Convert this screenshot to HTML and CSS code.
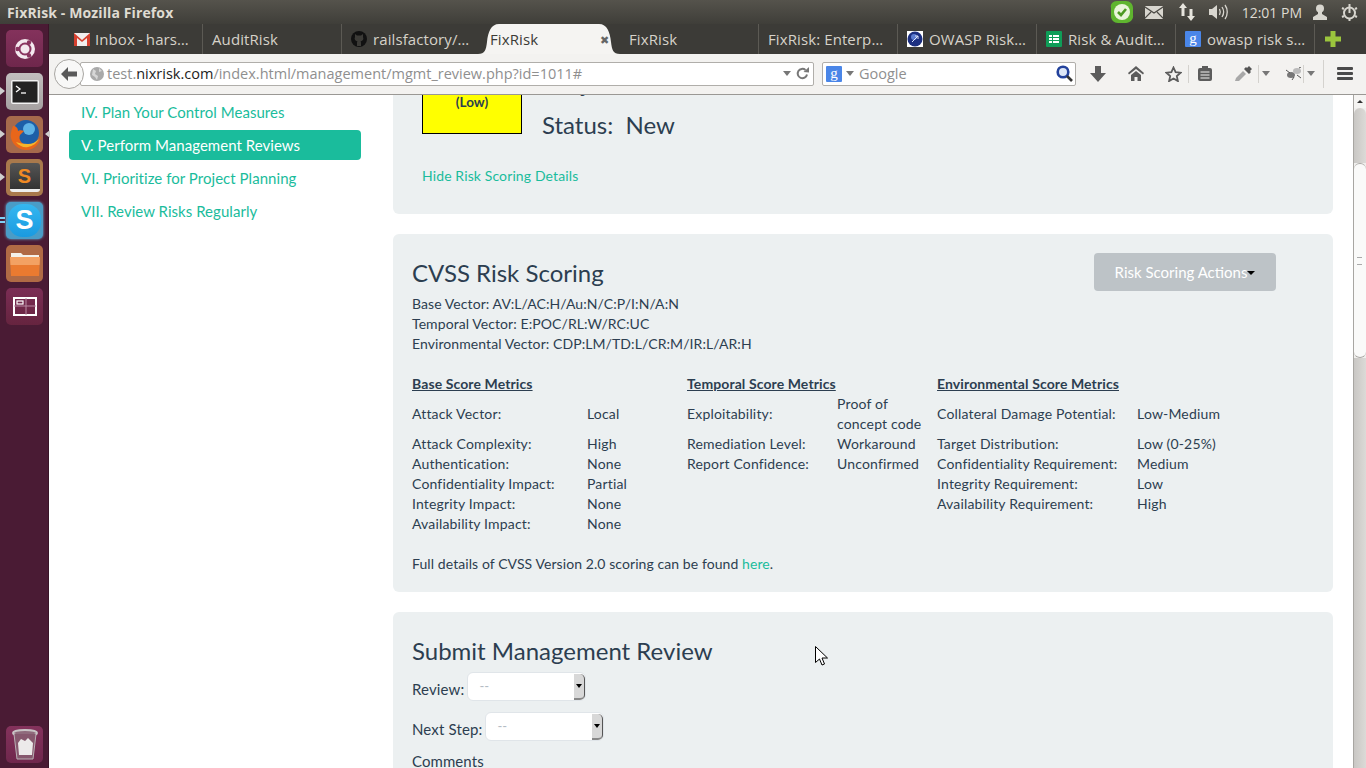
FILE: index.html
```html
<!DOCTYPE html>
<html lang="en">
<head>
    <meta charset="UTF-8">
    <title>FixRisk - Mozilla Firefox</title>
    <link rel="stylesheet" href="styles.css">
</head>
<body>
    <header class="panel">
        <div class="panel-title">FixRisk - Mozilla Firefox</div>
        <div class="panel-tray">
            <svg class="tray-skype" width="24" height="24" viewBox="0 0 24 24"><path d="M7 1h9c4 0 7 3 7 7v7c1 4-3 8-7 8H8c-4 0-7-3-7-7V8C0 4 3 1 7 1z" fill="#5fb52f"/><circle cx="12" cy="12" r="8" fill="#e9f5da"/><path d="M8 12l3 3 5-6" fill="none" stroke="#4c9a22" stroke-width="2.6"/></svg>
            <svg class="tray-mail" width="18" height="13" viewBox="0 0 18 13"><rect width="18" height="13" rx="1" fill="#d8d6cf"/><path d="M0 1l9 6 9-6M0 12l6-6M18 12l-6-6" fill="none" stroke="#4a4843" stroke-width="1.2"/></svg>
            <svg class="tray-net" width="18" height="18" viewBox="0 0 18 18"><path d="M5 0l4 5H6.500v8h-3V5H1zM13 18l-4-5h2.500V6h3v7H17z" fill="#e6e4dd"/></svg>
            <svg class="tray-sound" width="20" height="16" viewBox="0 0 20 16"><path d="M0 5h3l5-4v14l-5-4H0z" fill="#d8d6cf"/><path d="M10.500 5c1 2 1 4 0 6M13 3c2 3 2 7 0 10M16 1c3 4 3 10 0 14" fill="none" stroke="#d8d6cf" stroke-width="1.300"/></svg>
            <span class="panel-clock">12:01 PM</span>
            <svg class="tray-user" width="14" height="16" viewBox="0 0 14 16"><circle cx="7" cy="4.500" r="4" fill="#d8d6cf"/><path d="M5 8h4v2l5 3v3H0v-3l5-3z" fill="#d8d6cf"/></svg>
            <svg class="tray-power" width="17" height="17" viewBox="0 0 17 17"><circle cx="8.500" cy="9" r="5.500" fill="none" stroke="#d8d6cf" stroke-width="2"/><path d="M8.500 0v9" stroke="#d8d6cf" stroke-width="2"/><path d="M1 4l2 1M16 4l-2 1M1 13l2-1M16 13l-2-1M8.500 15v2" stroke="#d8d6cf" stroke-width="2"/></svg>
        </div>
    </header>

    <div class="desktop">
        <nav class="launcher">
            <div class="launcher-apps">
                <div class="tile tile-ubuntu">
                    <svg width="22" height="22" viewBox="0 0 22 22"><circle cx="11" cy="11" r="10" fill="#f4e9ef"/><circle cx="11" cy="11" r="5.500" fill="none" stroke="#8a3560" stroke-width="2"/><circle cx="3.500" cy="11" r="2.200" fill="#8a3560"/><circle cx="15" cy="4.500" r="2.200" fill="#8a3560"/><circle cx="15" cy="17.500" r="2.200" fill="#8a3560"/></svg>
                </div>
                <div class="tile tile-terminal has-pip">
                    <svg width="28" height="24" viewBox="0 0 28 24"><rect width="28" height="24" rx="2" fill="#f2f2f2"/><rect x="1.500" y="1.500" width="25" height="21" fill="#232323"/><path d="M5 6l4 3-4 3" fill="none" stroke="#fff" stroke-width="1.300"/><path d="M10 13h5" stroke="#fff" stroke-width="1.300"/></svg>
                </div>
                <div class="tile tile-firefox has-pip has-pip-right">
                    <svg width="36" height="34" viewBox="0 0 34 34"><circle cx="18" cy="15" r="13" fill="#1d5fa8"/><circle cx="21" cy="11" r="6" fill="#5fb3e6"/><path d="M5 8c-1 3-3 8-2 12 2 8 9 12 15 12 8 0 14-6 15-14-2 5-6 9-12 9-7 0-11-5-9-10l4-4c-2-1-5-1-6 0 0-3-2-5-5-5z" fill="#e8661a"/><path d="M8 24c3 4 8 6 12 5 5-1 9-4 11-8-3 3-7 5-11 5-5 0-9-1-12-2z" fill="#f6b52a"/></svg>
                </div>
                <div class="tile tile-sublime has-pip">
                    <div class="sublime-box">S</div>
                </div>
                <div class="tile tile-skype has-bars">
                    <div class="skype-bubble">S</div>
                </div>
                <div class="tile tile-files">
                    <svg width="30" height="26" viewBox="0 0 30 26"><path d="M1 2h10l2 2h16v4H1z" fill="#f4f1ea"/><path d="M0 6h30l-1 19H1z" fill="#ea7a30"/><path d="M0 6h30l-.5 8H.5z" fill="#f3a163"/></svg>
                </div>
                <div class="tile tile-workspaces">
                    <svg width="24" height="19" viewBox="0 0 24 19"><rect x="1" y="1" width="22" height="17" fill="none" stroke="#fff" stroke-width="2"/><path d="M13 1v17M1 9h22" stroke="#b98aa2" stroke-width="1"/><rect x="4" y="4" width="6" height="3" fill="none" stroke="#fff" stroke-width="1.200"/></svg>
                </div>
            </div>
            <div class="tile tile-trash">
                <svg width="26" height="31" viewBox="0 0 26 31"><ellipse cx="13" cy="4" rx="12" ry="3" fill="#8f6a7c" stroke="#c9c4c6" stroke-width="2"/><path d="M2 5l3 25h16l3-25" fill="#86586e" stroke="#b8b0b4"/><path d="M6 14l3-4 4 2 3-3 5 5-1 12H7z" fill="#eceaea"/></svg>
            </div>
        </nav>

        <div class="browser">
            <div class="tabstrip">
                <div class="tab">
                    <svg class="favicon" width="16" height="13" viewBox="0 0 16 13"><rect width="16" height="13" fill="#f0eeee"/><path d="M0 0l8 7 8-7v13h-3V5L8 9 3 5v8H0z" fill="#d5402f"/></svg>
                    <span class="tab-label">Inbox - hars…</span>
                </div>
                <div class="tab">
                    <span class="tab-label">AuditRisk</span>
                </div>
                <div class="tab">
                    <svg class="favicon" width="16" height="16" viewBox="0 0 16 16"><circle cx="8" cy="8" r="8" fill="#111"/><path d="M4 3l2 1.500h4L12 3v3c1 2 0 4-2.500 4.500.5.500.5 1 .5 2V15H6v-2.500c0-1 0-1.500.5-2C4 10 3 8 4 6z" fill="#3c3b37"/></svg>
                    <span class="tab-label">railsfactory/…</span>
                </div>
                <div class="tab tab-active">
                    <svg class="tab-shape" width="142" height="30" viewBox="0 0 142 30"><path d="M0 30c7 0 8-4 9-12 1-10 4-18 12-18h100c8 0 11 8 12 18 1 8 2 12 9 12z" fill="#f5f4f2"/></svg>
                    <span class="tab-label">FixRisk</span>
                    <span class="tab-close">✖</span>
                </div>
                <div class="tab tab-after-active">
                    <span class="tab-label">FixRisk</span>
                </div>
                <div class="tab">
                    <span class="tab-label">FixRisk: Enterp…</span>
                </div>
                <div class="tab">
                    <svg class="favicon" width="16" height="16" viewBox="0 0 16 16"><rect width="16" height="16" fill="#fff"/><circle cx="8" cy="8" r="7.500" fill="#1c2f80"/><circle cx="7" cy="6" r="3" fill="#5b7bd0"/><path d="M5 11l6-6M8 5h3v3" fill="none" stroke="#dfe6fa" stroke-width="1"/></svg>
                    <span class="tab-label">OWASP Risk…</span>
                </div>
                <div class="tab">
                    <svg class="favicon" width="16" height="16" viewBox="0 0 16 16"><rect width="16" height="16" rx="1" fill="#0f9d58"/><rect x="3" y="4" width="10" height="8" fill="#fff"/><path d="M3 6.500h10M3 9.500h10M6.500 4v8" stroke="#0f9d58"/></svg>
                    <span class="tab-label">Risk &amp; Audit…</span>
                </div>
                <div class="tab">
                    <span class="google-box favicon">g</span>
                    <span class="tab-label">owasp risk s…</span>
                </div>
                <div class="tab-new">
                    <svg width="16" height="16" viewBox="0 0 16 16"><path d="M5.500 0h5v5.500H16v5h-5.500V16h-5v-5.500H0v-5h5.500z" fill="#9bc53d"/></svg>
                </div>
            </div>

            <div class="toolbar">
                <div class="back-button">
                    <svg width="16" height="14" viewBox="0 0 16 14"><path d="M7 0L0 7l7 7V9.500h9v-5H7z" fill="#5a5a5a"/></svg>
                </div>
                <div class="urlbar">
                    <svg class="globe" width="14" height="14" viewBox="0 0 14 14"><circle cx="7" cy="7" r="7" fill="#a9a9a9"/><path d="M3 2l3 2-1 3 3 2-1 4-2-3-3-2zM9 1l3 3-3 1z" fill="#d6d6d6"/></svg>
                    <span class="url-text"><span class="url-dim">test.</span>nixrisk.com<span class="url-dim">/index.html/management/mgmt_review.php?id=1011#</span></span>
                    <span class="tri url-tri"></span>
                    <svg class="reload" width="13" height="13" viewBox="0 0 13 13"><path d="M11 7.500a4.700 4.700 0 1 1-1.500-4.500" fill="none" stroke="#777" stroke-width="2"/><path d="M7.500 5L13 5.500V0z" fill="#777"/></svg>
                </div>
                <div class="searchbar">
                    <span class="google-box">g</span>
                    <span class="tri search-tri"></span>
                    <span class="search-text">Google</span>
                    <svg class="magnifier" width="17" height="17" viewBox="0 0 17 17"><circle cx="7" cy="7" r="5.300" fill="#dce6f7" stroke="#23429c" stroke-width="2.600"/><path d="M11 11l5 5" stroke="#333" stroke-width="2.600"/></svg>
                </div>
                <div class="tools">
                    <svg class="tool-download" width="16" height="16" viewBox="0 0 16 16"><path d="M5 0h6v7h5l-8 9-8-9h5z" fill="#5c5c5c"/></svg>
                    <svg class="tool-home" width="16" height="15" viewBox="0 0 16 15"><path d="M8 0l8 7-1 1.500L8 3 1 8.500 0 7z" fill="#5c5c5c"/><path d="M3 9l5-4 5 4v6H9.500v-4h-3v4H3z" fill="#5c5c5c"/></svg>
                    <svg class="tool-star" width="17" height="16" viewBox="0 0 17 16"><path d="M8.500 1.500l2.100 4.700 5 .5-3.800 3.400 1.100 5-4.400-2.600-4.400 2.600 1.100-5L1.400 6.700l5-.5z" fill="none" stroke="#5c5c5c" stroke-width="1.800"/></svg>
                    <span class="tool-sep tool-sep-star"></span>
                    <svg class="tool-clip" width="14" height="15" viewBox="0 0 14 15"><rect y="2" width="14" height="13" rx="2" fill="#5c5c5c"/><rect x="4" width="6" height="4" fill="#5c5c5c"/><path d="M2.500 6h9M2.500 9h9M2.500 12h9" stroke="#f2f1f0"/></svg>
                    <svg class="tool-dropper" width="17" height="15" viewBox="0 0 17 15"><path d="M0 15l1-3 7-7 3 3-7 7z" fill="#a8a8a8"/><path d="M9 3l2-2 1 1 2-2 3 3-2 2 1 1-2 2z" fill="#555"/></svg>
                    <span class="tool-sep tool-sep-dropper"></span>
                    <span class="tri tool-tri"></span>
                    <svg class="tool-bug" width="16" height="13" viewBox="0 0 16 13"><ellipse cx="5" cy="8" rx="4" ry="3" fill="#777"/><ellipse cx="11" cy="4" rx="4" ry="3" fill="#bbb"/><path d="M0 3l4 3M8 10l-2 3M11 8l4 3M13 1l2-1" stroke="#555"/></svg>
                    <span class="tool-sep tool-sep-bug"></span>
                    <span class="tri tool-tri"></span>
                    <span class="tool-sep tool-sep-tall"></span>
                    <div class="hamburger"><span></span><span></span><span></span></div>
                </div>
            </div>

            <div class="viewport">
                <div class="page">
                    <aside class="sidebar">
                        <ul class="steps">
                            <li>IV. Plan Your Control Measures</li>
                            <li class="active">V. Perform Management Reviews</li>
                            <li>VI. Prioritize for Project Planning</li>
                            <li>VII. Review Risks Regularly</li>
                        </ul>
                    </aside>
                    <main class="content">
                        <section class="well well-score">
                            <div class="score-row">
                                <div class="score-box">(Low)</div>
                                <div class="score-info">
                                    <div class="score-line">Subject:</div>
                                    <div class="score-line">Status:&nbsp; New</div>
                                </div>
                            </div>
                            <a class="link score-toggle">Hide Risk Scoring Details</a>
                        </section>

                        <section class="well well-cvss">
                            <div class="cvss-head">
                                <h3>CVSS Risk Scoring</h3>
                                <button class="btn-actions">Risk Scoring Actions<span class="caret"></span></button>
                            </div>
                            <p>Base Vector: AV:L/AC:H/Au:N/C:P/I:N/A:N</p>
                            <p>Temporal Vector: E:POC/RL:W/RC:UC</p>
                            <p>Environmental Vector: CDP:LM/TD:L/CR:M/IR:L/AR:H</p>
                            <table class="metrics">
                                <colgroup>
                                    <col class="col-base-label"><col class="col-base-value">
                                    <col class="col-temp-label"><col class="col-temp-value">
                                    <col class="col-env-label"><col class="col-env-value">
                                </colgroup>
                                <tr class="metrics-head">
                                    <th colspan="2">Base Score Metrics</th>
                                    <th colspan="2">Temporal Score Metrics</th>
                                    <th colspan="2">Environmental Score Metrics</th>
                                </tr>
                                <tr>
                                    <td>Attack Vector:</td><td>Local</td>
                                    <td>Exploitability:</td><td>Proof of concept code</td>
                                    <td>Collateral Damage Potential:</td><td>Low-Medium</td>
                                </tr>
                                <tr>
                                    <td>Attack Complexity:</td><td>High</td>
                                    <td>Remediation Level:</td><td>Workaround</td>
                                    <td>Target Distribution:</td><td>Low (0-25%)</td>
                                </tr>
                                <tr>
                                    <td>Authentication:</td><td>None</td>
                                    <td>Report Confidence:</td><td>Unconfirmed</td>
                                    <td>Confidentiality Requirement:</td><td>Medium</td>
                                </tr>
                                <tr>
                                    <td>Confidentiality Impact:</td><td>Partial</td>
                                    <td></td><td></td>
                                    <td>Integrity Requirement:</td><td>Low</td>
                                </tr>
                                <tr>
                                    <td>Integrity Impact:</td><td>None</td>
                                    <td></td><td></td>
                                    <td>Availability Requirement:</td><td>High</td>
                                </tr>
                                <tr>
                                    <td>Availability Impact:</td><td>None</td>
                                    <td></td><td></td><td></td><td></td>
                                </tr>
                            </table>
                            <p>Full details of CVSS Version 2.0 scoring can be found <a class="link">here</a>.</p>
                        </section>

                        <section class="well well-review">
                            <h3>Submit Management Review</h3>
                            <div class="form-row">
                                <label>Review:</label>
                                <div class="select"><span class="select-value">--</span><span class="select-arrow"></span></div>
                            </div>
                            <div class="form-row">
                                <label>Next Step:</label>
                                <div class="select"><span class="select-value">--</span><span class="select-arrow"></span></div>
                            </div>
                            <p class="comments-label">Comments</p>
                        </section>
                    </main>
                </div>
                <div class="scrollbar">
                    <div class="scroll-up"></div>
                    <div class="scroll-before"></div>
                    <div class="scroll-thumb"><span class="grip"></span></div>
                    <div class="scroll-after"></div>
                </div>
                <svg class="cursor" width="13" height="20" viewBox="0 0 13 20"><path d="M.5.5v16l4-3.500 2.500 6 2.500-1-2.500-6h5.500z" fill="#fff" stroke="#000"/></svg>
            </div>
        </div>
    </div>
</body>
</html>
```

FILE: styles.css
```css
html, body {
    height: 100%;
}
body {
    margin: 0;
    overflow: hidden;
    display: flex;
    flex-direction: column;
    font-family: 'Lato', sans-serif;
    font-size: 14px;
    color: #2c3e50;
    background: #fff;
}

/* top panel */
.panel {
    height: 24px;
    flex: none;
    display: flex;
    align-items: center;
    justify-content: space-between;
    background: linear-gradient(#55534c, #3f3e39);
    font-family: 'Open Sans', sans-serif;
}
.panel-title {
    margin-left: 7px;
    font-size: 14px;
    font-weight: 700;
    letter-spacing: 0.12px;
    color: #dfdbd2;
}
.panel-tray {
    display: flex;
    align-items: center;
    margin-right: 8px;
}
.panel-clock {
    margin: 0 11px 0 13px;
    font-size: 14px;
    color: #dfdbd2;
}
.tray-skype { margin-right: 1px; }
.tray-mail { margin-left: 10px; }
.tray-net { margin-left: 15px; }
.tray-sound { margin-left: 13px; }
.tray-power { margin-left: 14px; }

.desktop {
    flex: 1;
    display: flex;
    min-height: 0;
}

/* launcher */
.launcher {
    width: 49px;
    flex: none;
    display: flex;
    flex-direction: column;
    justify-content: space-between;
    align-items: center;
    padding: 6px 0 5px;
    box-sizing: border-box;
    background: #4a1b34;
    box-shadow: inset -1px 0 0 #3a1428;
}
.launcher-apps {
    display: flex;
    flex-direction: column;
    gap: 6px;
}
.tile {
    position: relative;
    width: 37px;
    height: 37px;
    border-radius: 5px;
    display: flex;
    align-items: center;
    justify-content: center;
    background: linear-gradient(#84325c, #6f274c);
}
.tile-terminal { background: linear-gradient(#c2bebe, #a5a1a1); }
.tile-firefox { background: #a66a4c; }
.tile-sublime { background: #a9794c; }
.tile-skype {
    background: #4a9cc7;
    box-shadow: 0 0 3px #6cc4ee;
}
.tile-files { background: #b06a45; }
.tile-workspaces { background: linear-gradient(#7b2d55, #66243f); }
.has-pip::before, .has-pip-right::after {
    content: "";
    position: absolute;
    top: 14px;
    border: 4px solid transparent;
}
.has-pip::before {
    left: -6px;
    border-left: 5px solid #cfcfcf;
}
.has-pip-right::after {
    right: -7px;
    border-right: 5px solid #cfcfcf;
}
.has-bars::before {
    content: "";
    position: absolute;
    left: -6px;
    top: 15px;
    width: 5px;
    height: 2px;
    background: #7fd0f5;
    box-shadow: 0 4px 0 #7fd0f5;
}
.sublime-box {
    width: 30px;
    height: 26px;
    border-radius: 3px;
    background: linear-gradient(#555, #333);
    border-bottom: 3px solid #eee;
    color: #f08a24;
    font: 700 20px/26px 'Liberation Sans', sans-serif;
    text-align: center;
}
.skype-bubble {
    width: 33px;
    height: 33px;
    border-radius: 45%;
    background: linear-gradient(#35b7f0, #1a9ae0);
    color: #fff;
    font: 700 27px/33px 'Liberation Sans', sans-serif;
    text-align: center;
}

/* browser window */
.browser {
    flex: 1;
    min-width: 0;
    display: flex;
    flex-direction: column;
}
.tabstrip {
    height: 30px;
    flex: none;
    display: flex;
    padding-left: 15px;
    background: #3c3b37;
    font-family: 'Open Sans', sans-serif;
    font-size: 15px;
    letter-spacing: 0.1px;
    color: #d6d2c9;
}
.tab {
    position: relative;
    width: 139px;
    flex: none;
    display: flex;
    align-items: center;
    box-sizing: border-box;
    padding-left: 9px;
    border-right: 1px solid #5c5a54;
}
.tab:nth-child(3) { border-right: none; }
.tab:first-child .tab-label { word-spacing: -1px; }
.tab-active {
    color: #3c3b37;
    border-right: none;
}
.tab-after-active {
    padding-left: 9px;
}
.tab-shape {
    position: absolute;
    left: -3px;
    bottom: 0;
}
.tab-label {
    position: relative;
    white-space: nowrap;
}
.tab-close {
    position: absolute;
    right: 11px;
    top: 8px;
    font-size: 11px;
    color: #666;
}
.favicon {
    flex: none;
    margin-right: 6px;
}
.tab:first-child .favicon { margin-right: 5px; margin-left: 1px; }
.google-box {
    display: inline-block;
    width: 16px;
    height: 16px;
    background: #4a86e8;
    color: #fff;
    font: 400 15px/14px 'Liberation Serif', serif;
    letter-spacing: 0;
    text-align: center;
    border-radius: 1px;
}
.tab-new {
    margin-left: 10px;
    display: flex;
    align-items: center;
}

/* toolbar */
.toolbar {
    height: 41px;
    flex: none;
    box-sizing: border-box;
    display: flex;
    align-items: center;
    padding: 0 0 1px 5px;
    background: #f3f2f0;
    border-bottom: 1px solid #9a9894;
    font-family: 'Open Sans', sans-serif;
}
.back-button {
    position: relative;
    z-index: 1;
    width: 30px;
    height: 30px;
    margin-top: 1px;
    border-radius: 50%;
    box-sizing: border-box;
    border: 1px solid #a8a6a2;
    background: #f8f8f7;
    display: flex;
    align-items: center;
    justify-content: center;
}
.urlbar, .searchbar {
    height: 24px;
    box-sizing: border-box;
    display: flex;
    align-items: center;
    background: #fff;
    border: 1px solid #b0aeaa;
    border-radius: 2px;
}
.urlbar {
    width: 734px;
    margin-left: -4px;
    padding-left: 9px;
    font-size: 14.500px;
    color: #222;
}
.url-dim { color: #8f8f8f; }
.globe { flex: none; margin-right: 3px; }
.url-text {
    flex: 1;
    white-space: nowrap;
}
.tri {
    display: inline-block;
    width: 0;
    height: 0;
    border: 4px solid transparent;
    border-top: 5px solid #777;
    border-bottom: none;
}
.url-tri { margin-right: 5px; }
.reload { margin-right: 4px; }
.searchbar {
    width: 254px;
    margin-left: 8px;
    padding-left: 3px;
    font-size: 14.500px;
    color: #8f8f8f;
}
.search-tri { margin-left: 4px; }
.search-text {
    flex: 1;
    margin-left: 5px;
}
.magnifier { margin-right: 2px; }
.tools {
    display: flex;
    align-items: center;
    height: 30px;
}
.tool-download { margin-left: 14px; }
.tool-home { margin-left: 22px; }
.tool-star { margin-left: 21px; }
.tool-sep {
    width: 1px;
    height: 18px;
    background: #d4d2ce;
    margin-left: 7px;
}
.tool-sep-star { margin-left: 6px; }
.tool-clip { margin-left: 9px; }
.tool-dropper { margin-left: 23px; }
.tool-sep-dropper { margin-left: 6px; }
.tool-tri { margin-left: 3px; }
.tool-bug { margin-left: 16px; }
.tool-sep-bug { margin-left: 1px; }
.tool-sep-tall {
    height: 28px;
    margin-left: 8px;
}
.hamburger {
    width: 16px;
    margin-left: 13px;
    display: flex;
    flex-direction: column;
    gap: 2px;
}
.hamburger span {
    height: 3px;
    border-radius: 1px;
    background: #4a4a4a;
}

/* page */
.viewport {
    position: relative;
    flex: 1;
    min-height: 0;
    display: flex;
    overflow: hidden;
}
.page {
    flex: 1;
    min-width: 0;
    display: flex;
    align-items: flex-start;
    margin-top: -81px;
}
.sidebar {
    width: 292px;
    flex: none;
    margin-left: 20px;
    padding-top: 83px;
}
.steps {
    list-style: none;
    margin: 0;
    padding: 0;
    display: flex;
    flex-direction: column;
    gap: 3px;
}
.steps li {
    height: 30px;
    padding: 0 12px;
    border-radius: 4px;
    font-size: 15px;
    letter-spacing: 0.04px;
    line-height: 30px;
    color: #1abc9c;
}
.steps li.active {
    background: #1abc9c;
    color: #fff;
}
.content {
    width: 940px;
    flex: none;
    margin-left: 32px;
}
.link {
    color: #1abc9c;
}
.well {
    background: #ecf0f1;
    border-radius: 6px;
    padding: 0 19px;
    margin-bottom: 20px;
}
.well p {
    margin: 0;
    line-height: 20px;
    letter-spacing: 0.08px;
}
h3 {
    margin: 0;
    font-size: 24px;
    font-weight: 400;
    line-height: 26px;
}

.well-score {
    height: 200px;
    box-sizing: border-box;
    padding: 20px 29px 0;
}
.score-row {
    display: flex;
}
.score-box {
    width: 100px;
    height: 100px;
    box-sizing: border-box;
    padding-top: 59px;
    border: 1px solid #000;
    background: #ff0;
    text-align: center;
    font-size: 13.500px;
    font-weight: 700;
    line-height: 16px;
}
.score-info {
    margin-left: 20px;
    font-size: 24px;
}
.score-line {
    height: 42px;
    line-height: 42px;
    margin-top: 28px;
}
.score-line + .score-line {
    margin-top: 0;
}
.score-toggle {
    display: block;
    margin-top: 20px;
    line-height: 20px;
    letter-spacing: 0.12px;
}

.well-cvss {
    height: 358px;
    box-sizing: border-box;
    padding-top: 26px;
}
.cvss-head {
    position: relative;
    height: 34px;
}
.btn-actions {
    position: absolute;
    top: -7px;
    left: 682px;
    width: 182px;
    height: 38px;
    padding: 0;
    border: none;
    border-radius: 4px;
    background: #bdc3c7;
    color: #fff;
    font: 15px 'Lato', sans-serif;
}
.caret {
    display: inline-block;
    margin-bottom: 2px;
    border: 4px solid transparent;
    border-top: 4px solid #000;
    border-bottom: none;
    vertical-align: middle;
}

.metrics {
    table-layout: fixed;
    width: 905px;
    margin: 20px 0;
    border-collapse: collapse;
}
.metrics th, .metrics td {
    padding: 0;
    text-align: left;
    line-height: 20px;
    font-weight: 400;
    letter-spacing: 0.17px;
}
.metrics-head th {
    padding-bottom: 0;
    font-weight: 700;
    letter-spacing: 0.1px;
    text-decoration: underline;
}
.col-base-label { width: 175px; }
.col-base-value { width: 100px; }
.col-temp-label { width: 150px; }
.col-temp-value { width: 100px; }
.col-env-label { width: 200px; }
.metrics td:nth-child(4) { padding-right: 12px; }

.well-review {
    height: 200px;
    box-sizing: border-box;
    padding-top: 26px;
}
.form-row {
    display: flex;
    align-items: center;
    gap: 3px;
    height: 30px;
    margin-bottom: 10px;
}
.well-review h3 { margin-bottom: 7px; }
.form-row label {
    font-size: 15px;
    letter-spacing: 0.15px;
    padding-top: 5px;
}
.well .comments-label {
    font-size: 15px;
}
.select {
    position: relative;
    width: 119px;
    height: 29px;
    box-sizing: border-box;
    border: 1px solid #e0e5e9;
    border-radius: 6px;
    background: #fff;
    color: #b4bcc4;
    line-height: 26px;
    padding-left: 11px;
    font-size: 13px;
}
.select-arrow {
    position: absolute;
    right: 0;
    top: 1px;
    bottom: 0;
    width: 10px;
    background: #d8d8d8;
    border-right: 1px solid #555;
    border-bottom: 2px solid #888;
    border-radius: 0 5px 5px 0;
}
.select-arrow::after {
    content: "";
    position: absolute;
    left: 2px;
    top: 10px;
    border: 3px solid transparent;
    border-top: 4px solid #000;
    border-bottom: none;
}

.scrollbar {
    width: 13px;
    flex: none;
    display: flex;
    flex-direction: column;
    box-sizing: border-box;
    border-left: 1px solid #a8a6a2;
    background: #f0efed;
}
.scroll-up {
    height: 13px;
    position: relative;
    background: #f5f4f2;
}
.scroll-up::after {
    content: "";
    position: absolute;
    left: 3px;
    top: 5px;
    border: 3px solid transparent;
    border-bottom: 3px solid #333;
    border-top: none;
}
.scroll-before {
    height: 55px;
    background: linear-gradient(90deg, #c9c7c4, #dcdad7);
    border-radius: 6px 6px 0 0;
}
.scroll-thumb {
    height: 195px;
    box-sizing: border-box;
    position: relative;
    background: #fafaf9;
    border-radius: 6px;
    border-top: 1px solid #a8a6a2;
    border-bottom: 1px solid #a8a6a2;
}
.grip {
    position: absolute;
    left: 3px;
    top: 93px;
    width: 5px;
    height: 6px;
    border-top: 1px solid #aaa;
    border-bottom: 1px solid #aaa;
}
.scroll-after {
    flex: 1;
    background: linear-gradient(90deg, #c9c7c4, #dcdad7);
}
.cursor {
    position: absolute;
    left: 766px;
    top: 551px;
}
```
